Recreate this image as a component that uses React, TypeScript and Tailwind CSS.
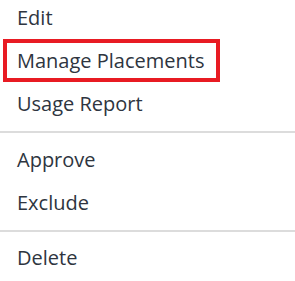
const textFont = { fontFamily: '"Open Sans", "Noto Sans", sans-serif' };

function Item({ label }: { label: string }) {
  return (
    <div className="h-[43px] flex items-center pl-[17px] text-[20px] text-[#2e3540]">
      {label}
    </div>
  );
}

function Divider({ className }: { className: string }) {
  return <div className={"h-[2px] bg-[#dcdcdc] " + className} />;
}

export default function App() {
  return (
    <div className="w-[295px] h-[281px] bg-white overflow-hidden" style={textFont}>
      <div className="-mt-[4px] flex flex-col">
        <Item label="Edit" />
        {/* highlighted entry */}
        <div className="ml-[3px] w-[217px] h-[43px] border-4 border-[#e81b23] flex items-center pl-[10px] text-[20px] text-[#2e3540]">
          Manage Placements
        </div>
        <Item label="Usage Report" />
        <Divider className="mt-[6px] mb-[5px]" />
        <Item label="Approve" />
        <Item label="Exclude" />
        <Divider className="mt-[6px] mb-[4px]" />
        <Item label="Delete" />
      </div>
    </div>
  );
}
